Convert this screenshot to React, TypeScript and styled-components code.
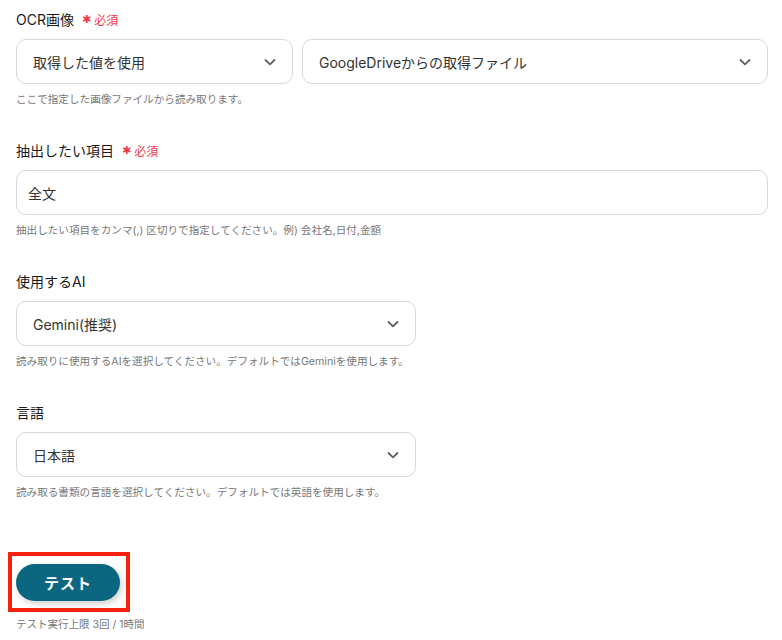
import styled, { createGlobalStyle } from "styled-components";

const GlobalStyle = createGlobalStyle`
  body {
    margin: 0;
    background: #ffffff;
    font-family: "Inter", "Noto Sans CJK JP", sans-serif;
    color: #222222;
  }
`;

const Chevron = () => (
  <svg width="14" height="14" viewBox="0 0 14 14" fill="none">
    <path
      d="M2.5 5 L7 9.3 L11.5 5"
      stroke="#5f5f5f"
      strokeWidth="1.8"
      strokeLinecap="round"
      strokeLinejoin="round"
    />
  </svg>
);

type SelectProps = { value: string; width?: string };

const Select = ({ value, width }: SelectProps) => (
  <SelectBox $width={width}>
    <SelectValue>{value}</SelectValue>
    <Chevron />
  </SelectBox>
);

const App = () => {
  return (
    <>
      <GlobalStyle />
      <Page>
        <Section>
          <Label>
            OCR画像
            <Required>
              <Star>✱</Star>必須
            </Required>
          </Label>
          <FieldRow>
            <Select value="取得した値を使用" width="277px" />
            <Select value="GoogleDriveからの取得ファイル" />
          </FieldRow>
          <Help>ここで指定した画像ファイルから読み取ります。</Help>
        </Section>

        <Section>
          <Label>
            抽出したい項目
            <Required>
              <Star>✱</Star>必須
            </Required>
          </Label>
          <TextInput>全文</TextInput>
          <Help>抽出したい項目をカンマ(,) 区切りで指定してください。例) 会社名,日付,金額</Help>
        </Section>

        <Section>
          <Label>使用するAI</Label>
          <Select value="Gemini(推奨)" width="400px" />
          <Help>読み取りに使用するAIを選択してください。デフォルトではGeminiを使用します。</Help>
        </Section>

        <Section>
          <Label>言語</Label>
          <Select value="日本語" width="400px" />
          <Help>読み取る書類の言語を選択してください。デフォルトでは英語を使用します。</Help>
        </Section>

        <Footer>
          <Highlight>
            <TestButton>テスト</TestButton>
          </Highlight>
          <Limit>テスト実行上限 3回 / 1時間</Limit>
        </Footer>
      </Page>
    </>
  );
};
export default App;

const Page = styled.div`
  padding: 9px 14px 0 16px;
  display: flex;
  flex-direction: column;
  gap: 32px;
`;

const Section = styled.div`
  display: flex;
  flex-direction: column;
`;

const Label = styled.div`
  display: flex;
  align-items: center;
  height: 20px;
  font-size: 14px;
  font-weight: 400;
  color: #1a1a1a;
  margin-bottom: 10px;
`;

const Required = styled.span`
  display: flex;
  align-items: center;
  margin-left: 8px;
  font-size: 12px;
  font-weight: 400;
  color: #ef3b4a;
`;

const Star = styled.span`
  font-family: "DejaVu Sans", sans-serif;
  font-size: 11px;
  margin-right: 3px;
`;

const FieldRow = styled.div`
  display: flex;
  gap: 9px;
`;

const SelectBox = styled.div<{ $width?: string }>`
  box-sizing: border-box;
  display: flex;
  align-items: center;
  justify-content: space-between;
  height: 45px;
  padding: 0 15px 0 16px;
  border: 1px solid #d6d8dc;
  border-radius: 10px;
  background: #ffffff;
  ${({ $width }) => ($width ? `width: ${$width}; flex: none;` : `flex: 1;`)}
`;

const SelectValue = styled.span`
  font-size: 14px;
  color: #333333;
`;

const TextInput = styled.div`
  box-sizing: border-box;
  display: flex;
  align-items: center;
  height: 45px;
  padding: 0 11px;
  border: 1px solid #d6d8dc;
  border-radius: 10px;
  font-size: 14px;
  color: #333333;
`;

const Help = styled.div`
  margin-top: 8px;
  height: 16px;
  line-height: 16px;
  font-size: 10.6px;
  color: #777777;
`;

const Footer = styled.div`
  display: flex;
  flex-direction: column;
  align-items: flex-start;
  margin-top: 19px;
  margin-left: -8px;
`;

const Highlight = styled.div`
  border: 4px solid #f4230f;
  padding: 8px 6px 7px 4px;
`;

const TestButton = styled.button`
  width: 104px;
  height: 37px;
  border: none;
  border-radius: 19px;
  background: #0b677f;
  color: #ffffff;
  font-family: "Inter", "Noto Sans CJK JP", sans-serif;
  font-size: 15px;
  font-weight: 700;
  letter-spacing: 1px;
  box-shadow: 2px 3px 6px rgba(0, 0, 0, 0.18);
  cursor: pointer;
`;

const Limit = styled.div`
  margin-top: 4px;
  margin-left: 8px;
  font-size: 10.5px;
  color: #777777;
`;
